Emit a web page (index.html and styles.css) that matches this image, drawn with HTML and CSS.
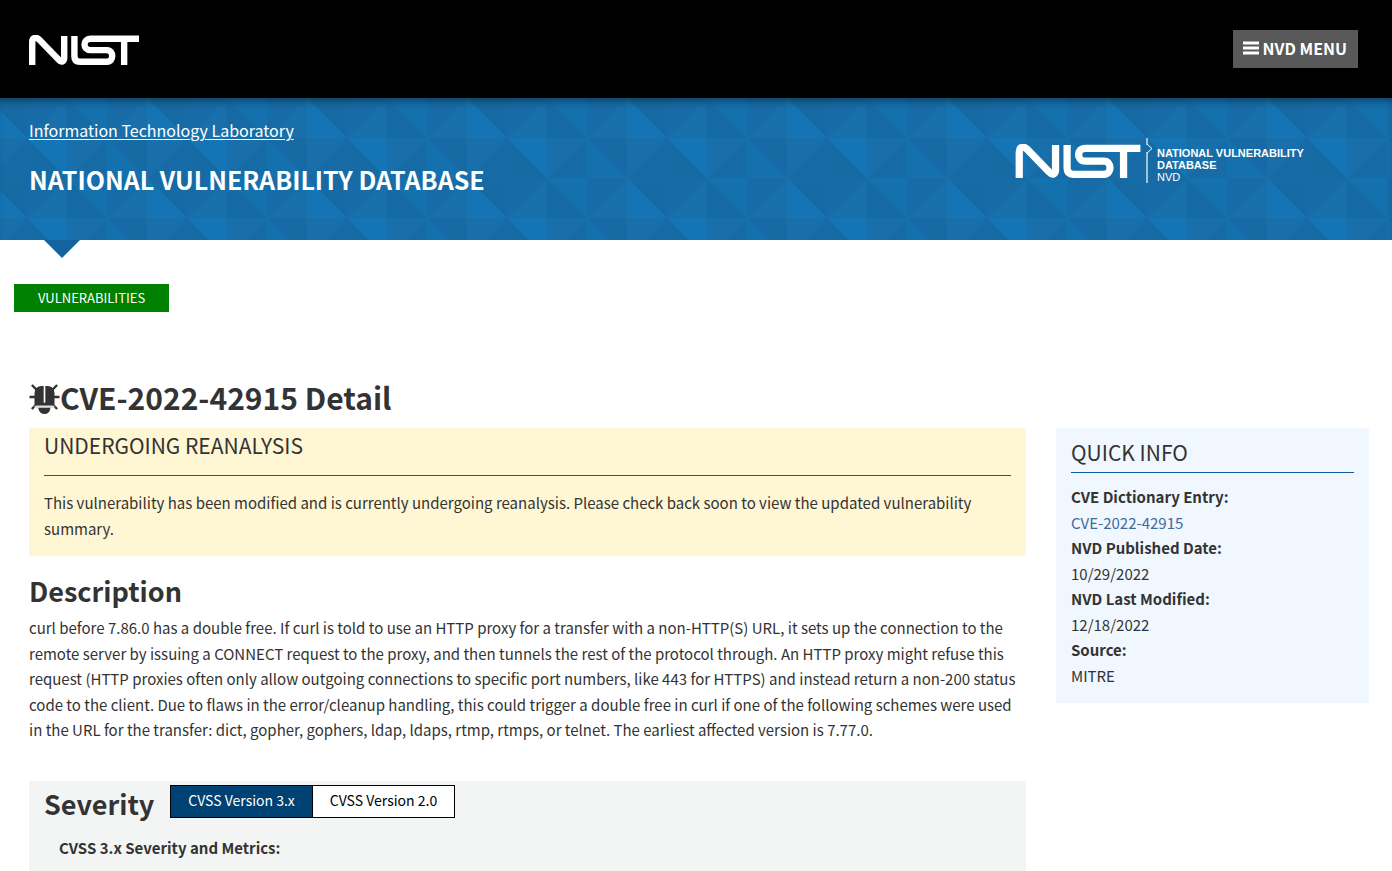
FILE: index.html
```html
<!DOCTYPE html>
<html lang="en">
<head>
<meta charset="utf-8">
<meta name="viewport" content="width=device-width, initial-scale=1">
<title>NVD - CVE-2022-42915</title>
<link rel="stylesheet" href="styles.css">
</head>
<body>
<svg class="symbols" aria-hidden="true">
  <symbol id="nist" viewBox="0 0 378 103">
    <g fill="none" stroke="currentColor" stroke-width="22">
      <path d="M11 103V25C11 8 24 6 34 15L103 86C112 96 121 91 121 78V3"/>
      <path d="M156 3V73Q156 92 175 92H268C292 92 292 52 268 52H211C184 52 184 13 211 13H378"/>
      <path d="M327 12V103"/>
    </g>
  </symbol>
</svg>

<header class="topbar">
  <a class="topbar-logo" href="#" aria-label="National Institute of Standards and Technology">
    <svg class="nist-small"><use href="#nist"/></svg>
  </a>
  <button class="menu-button" type="button">
    <svg class="menu-icon" viewBox="0 0 16 14" aria-hidden="true"><path d="M0 2h16M0 7h16M0 12h16" stroke="currentColor" stroke-width="3"/></svg>
    NVD MENU
  </button>
</header>

<section class="banner">
  <div class="banner-titles">
    <a class="lab-link" href="#">Information Technology Laboratory</a>
    <a class="site-title" href="#">NATIONAL VULNERABILITY DATABASE</a>
  </div>
  <a class="nvd-logo" href="#">
    <svg class="nist-large" aria-hidden="true"><use href="#nist"/></svg>
    <svg class="logo-divider" viewBox="0 0 8 45" aria-hidden="true"><path d="M2 0V7M2 14V45" stroke="#9cc2de" stroke-width="2"/><path d="M2 6L7 10.500L2 15" fill="none" stroke="#fff"/></svg>
    <span class="nvd-words"><b>NATIONAL VULNERABILITY</b><b>DATABASE</b><span>NVD</span></span>
  </a>
</section>

<main class="page">
  <a class="section-tag" href="#">VULNERABILITIES</a>

  <h1 class="title">
    <svg class="bug" viewBox="0 0 90 90" aria-hidden="true">
      <path d="M0 39H90M7 3L24 20M83 3L66 20M7 75L24 58M83 75L66 58" stroke="#333" stroke-width="7"/>
      <path d="M15 65V28Q15 8 34 6H56Q75 8 75 28V65Z" fill="#333"/>
      <path d="M45 4V56" stroke="#fff" stroke-width="5"/>
      <path d="M15 68H75" stroke="#ddd" stroke-width="6"/>
      <path d="M26 71H63Q60 90 45 90Q30 90 26 71Z" fill="#333"/>
    </svg>CVE-2022-42915 Detail</h1>

  <div class="columns">
    <div class="details">
      <section class="notice">
        <h2 class="panel-heading notice-heading">UNDERGOING REANALYSIS</h2>
        <p>This vulnerability has been modified and is currently undergoing reanalysis. Please check back soon to view the updated vulnerability summary.</p>
      </section>

      <h2 class="heading">Description</h2>
      <p class="description">curl before 7.86.0 has a double free. If curl is told to use an HTTP proxy for a transfer with a non-HTTP(S) URL, it sets up the connection to the remote server by issuing a CONNECT request to the proxy, and then tunnels the rest of the protocol through. An HTTP proxy might refuse this request (HTTP proxies often only allow outgoing connections to specific port numbers, like 443 for HTTPS) and instead return a non-200 status code to the client. Due to flaws in the error/cleanup handling, this could trigger a double free in curl if one of the following schemes were used in the URL for the transfer: dict, gopher, gophers, ldap, ldaps, rtmp, rtmps, or telnet. The earliest affected version is 7.77.0.</p>

      <section class="severity">
        <div class="severity-bar">
          <h2 class="heading">Severity</h2>
          <div class="versions">
            <button class="version version-active" type="button">CVSS Version 3.x</button>
            <button class="version" type="button">CVSS Version 2.0</button>
          </div>
        </div>
        <h3 class="metrics">CVSS 3.x Severity and Metrics:</h3>
      </section>
    </div>

    <aside class="quick-info">
      <h2 class="panel-heading quick-heading">QUICK INFO</h2>
      <dl class="facts">
        <dt>CVE Dictionary Entry:</dt><dd><a href="#">CVE-2022-42915</a></dd>
        <dt>NVD Published Date:</dt><dd>10/29/2022</dd>
        <dt>NVD Last Modified:</dt><dd>12/18/2022</dd>
        <dt>Source:</dt><dd>MITRE</dd>
      </dl>
    </aside>
  </div>
</main>
</body>
</html>
```
FILE: styles.css
```css
* { box-sizing: border-box; }

body {
  margin: 0;
  background: #fff;
  color: #333;
  font-family: "Noto Sans CJK SC", "Noto Sans", sans-serif;
  font-size: 15px;
  line-height: 1.7;
}

h1, h2, h3, p, dl, dd { margin: 0; }
a { color: #3c6c9e; text-decoration: none; }
button { font-family: inherit; cursor: pointer; }

.symbols { position: absolute; width: 0; height: 0; }

/* Top bar */
.topbar {
  display: flex;
  justify-content: space-between;
  align-items: center;
  padding: 30px 34px 30px 29px;
  background: #000;
}
.topbar-logo { display: flex; padding-top: 2px; color: #fff; }
.nist-small { width: 110px; height: 30px; }
.menu-button {
  display: flex;
  align-items: center;
  gap: 4px;
  height: 38px;
  padding: 0 11px 2px 10px;
  border: 0;
  background: #595959;
  color: #fff;
  font-size: 16px;
  font-weight: 700;
}
.menu-icon { width: 16px; height: 14px; }

/* Banner */
.banner {
  position: relative;
  display: flex;
  justify-content: space-between;
  align-items: flex-start;
  min-height: 142px;
  padding: 19px 83px 20px 29px;
  color: #fff;
  background-color: #176daa;
  background-image: url("data:image/svg+xml,%3Csvg xmlns='http://www.w3.org/2000/svg' width='160' height='80'%3E%3Cpath fill='%23186faa' d='M0 0h160v80H0z'/%3E%3Cpath fill='%23166ba4' d='M0 0h40v40zM80 0v40h40zM40 40v40h40zM120 40h40v40z'/%3E%3Cpath fill='%231574b4' d='M0 0v40h40zM40 40h40v40z'/%3E%3Cpath fill='%231570ae' d='M80 0h40v40zM120 40v40h40z'/%3E%3Cpath fill='%23176ca7' d='M40 0v40L80 0zM120 0v40l40-40zM0 80h40V40zM80 80h40V40z'/%3E%3C/svg%3E");
  background-position: -13px 0;
  box-shadow: inset 0 8px 10px -6px rgba(0, 0, 0, .5);
}
.banner::after {
  content: "";
  position: absolute;
  top: 100%;
  left: 44px;
  border: 18px solid transparent;
  border-top-color: #12659f;
  border-bottom: 0;
}
.banner-titles { display: flex; flex-direction: column; align-items: flex-start; gap: 16px; }
.lab-link { color: #fff; font-size: 16px; line-height: 26px; text-decoration: underline; text-underline-offset: 2px; }
.site-title { color: #fff; font-size: 25px; line-height: 40px; font-weight: 700; }
.nvd-logo { display: flex; align-items: center; margin-top: 21px; color: #fff; }
.nist-large { width: 126px; height: 34px; }
.logo-divider { width: 8px; height: 45px; margin: 0 4px; }
.nvd-words {
  display: flex;
  flex-direction: column;
  width: 152px;
  padding-top: 8px;
  font: 11px/12px "Liberation Sans", Arial, sans-serif;
}

/* Page */
.page { padding: 44px 23px 0 29px; }
.section-tag {
  display: inline-block;
  margin-left: -15px;
  padding: 0 24px;
  background: green;
  color: #fff;
  font-size: 13px;
  line-height: 28px;
}
.title {
  display: flex;
  align-items: center;
  margin: 60px 0 6px;
  color: #333;
  font-size: 30px;
  line-height: 50px;
}
.bug { width: 31px; height: 30px; margin-top: 4px; }

.columns {
  display: grid;
  grid-template-columns: minmax(0, 997fr) minmax(0, 313fr);
  gap: 30px;
  align-items: start;
}
.panel-heading { font-size: 21px; font-weight: 400; border-bottom: 1px solid #12599b; }
.notice { padding: 0 15px 15px; background: #fff6d3; }
.notice-heading { margin-bottom: 14px; padding-bottom: 13px; line-height: 34px; }
.heading { font-size: 27px; line-height: 40px; font-weight: 700; }
.details > .heading { margin: 15px 0 4px; }
.description { padding-right: 8px; }
.severity { margin-top: 38px; padding: 4px 15px 15px; background: #f3f5f5; }
.severity-bar { display: flex; align-items: flex-start; gap: 16px; }
.severity-bar .heading { line-height: 38px; }
.versions { display: flex; border: 1px solid #000; }
.version {
  padding: 0 17px 2px;
  border: 0;
  background: #fff;
  color: #000;
  font-size: 14px;
  line-height: 29px;
}
.version-active { border-right: 1px solid #000; background: #004173; color: #fff; }
.metrics { margin: 12px 15px 0; font-size: 15px; line-height: 26px; }

.quick-info { padding: 7px 15px 15px; background: #f0f7fe; }
.quick-heading { margin-bottom: 11px; padding-bottom: 2px; line-height: 35px; }
.facts dt { font-weight: 700; }
```
